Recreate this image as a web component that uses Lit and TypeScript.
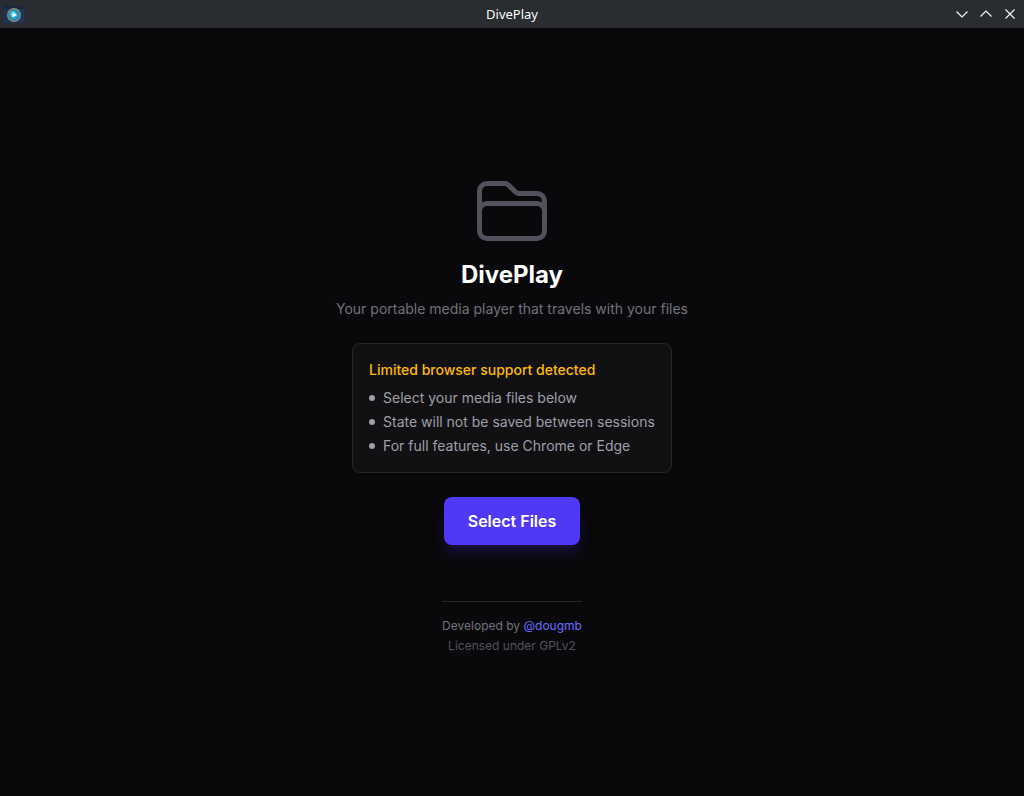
import { LitElement, css, html } from "lit";
import { customElement } from "lit/decorators.js";

@customElement("window-bar")
class WindowBar extends LitElement {
  static styles = css`
    :host {
      display: grid;
      grid-template-columns: 1fr auto 1fr;
      align-items: center;
      height: 28px;
      padding: 0 4px;
      background: #292c30;
      color: #fcfcfc;
      font: 13px/20px "Noto Sans", sans-serif;
    }
    .logo {
      display: block;
    }
    .controls {
      display: flex;
      justify-content: flex-end;
      gap: 4px;
    }
    .control {
      display: flex;
      padding: 0;
      border: 0;
      background: none;
      color: inherit;
    }
  `;

  render() {
    return html`
      <svg class="logo" width="20" height="20" viewBox="0 0 20 20" aria-hidden="true">
        <path d="M0 3q0-2 2-2h5l1.500 1.500H18q2 0 2 2V17q0 2-2 2H2q-2 0-2-2z" fill="#1a2740" />
        <path d="M0 5h20v12q0 2-2 2H2q-2 0-2-2z" fill="#1a365c" />
        <circle cx="10" cy="11" r="6.200" fill="#1583b5" stroke="#8f8468" stroke-width="1.600" />
        <circle cx="10" cy="11" r="4.200" fill="#22a5cf" />
        <circle cx="9" cy="10" r="2.800" fill="#4accdf" />
        <path d="M8.500 8.500l4.500 2.500-4.500 2.500z" fill="#f3fdff" />
      </svg>
      <span>DivePlay</span>
      <div class="controls">
        ${[
          ["Minimize", "M4.500 7.500l5.500 5.500 5.500-5.500"],
          ["Maximize", "M4.500 12.500L10 7l5.500 5.500"],
          ["Close", "M5.500 5.500l9 9M14.500 5.500l-9 9"],
        ].map(
          ([label, d]) => html`
            <button class="control" aria-label=${label}>
              <svg width="20" height="20" viewBox="0 0 20 20" fill="none" stroke="currentColor" stroke-width="1.100">
                <path d=${d} />
              </svg>
            </button>
          `
        )}
      </div>
    `;
  }
}

@customElement("app-root")
class AppRoot extends LitElement {
  static styles = css`
    :host {
      display: flex;
      flex-direction: column;
      min-height: 100vh;
      background: #09090b;
      font: 14px/20px Inter, sans-serif;
    }
    .welcome {
      flex: 1;
      display: flex;
      flex-direction: column;
      align-items: center;
      justify-content: center;
      text-align: center;
    }
    .folder {
      width: 80px;
      height: 80px;
      color: #52525c;
    }
    .title {
      margin: 8px 0;
      color: #fff;
      font-size: 24px;
      line-height: 32px;
      font-weight: 700;
    }
    .tagline {
      margin: 0 0 24px;
      color: #71717b;
    }
    .notice {
      box-sizing: border-box;
      width: 100%;
      max-width: 320px;
      margin-bottom: 24px;
      padding: 16px;
      border: 1px solid #27272a;
      border-radius: 8px;
      background: #111113;
      text-align: left;
    }
    .warning {
      margin: 0 0 8px;
      color: #ffb900;
      font-size: 14px;
      line-height: 20px;
      font-weight: 500;
    }
    .points {
      display: grid;
      gap: 4px;
      margin: 0;
      padding: 0;
      list-style: none;
      color: #9f9fa9;
    }
    .point {
      display: flex;
      align-items: center;
      gap: 8px;
    }
    .point::before {
      content: "";
      width: 6px;
      height: 6px;
      border-radius: 50%;
      background: currentColor;
    }
    .select {
      padding: 12px 24px;
      border: 0;
      border-radius: 8px;
      background: #4f39f6;
      color: #fff;
      font: 600 16px/24px Inter, sans-serif;
      box-shadow: 0 10px 15px -3px #4f39f633, 0 4px 6px -4px #4f39f633;
    }
    .credits {
      display: grid;
      gap: 4px;
      margin-top: 56px;
      padding-top: 16px;
      border-top: 1px solid #27272a;
      color: #71717b;
      font-size: 12px;
      line-height: 16px;
    }
    .author {
      color: #6b6dff;
      text-decoration: none;
    }
    .license {
      color: #52525c;
    }
  `;

  render() {
    return html`
      <window-bar></window-bar>
      <main class="welcome">
        <svg class="folder" viewBox="0 0 24 24" fill="none" stroke="currentColor" stroke-width="1.500" stroke-linecap="round" stroke-linejoin="round" aria-hidden="true">
          <path d="M2.250 12.750V12A2.250 2.250 0 0 1 4.500 9.750h15A2.250 2.250 0 0 1 21.750 12v.75m-8.690-6.440-2.120-2.120a1.500 1.500 0 0 0-1.061-.44H4.500A2.250 2.250 0 0 0 2.250 6v12a2.250 2.250 0 0 0 2.250 2.250h15A2.250 2.250 0 0 0 21.750 18V9a2.250 2.250 0 0 0-2.250-2.250h-5.379a1.500 1.500 0 0 1-1.060-.44Z" />
        </svg>
        <h1 class="title">DivePlay</h1>
        <p class="tagline">Your portable media player that travels with your files</p>
        <section class="notice">
          <h2 class="warning">Limited browser support detected</h2>
          <ul class="points">
            <li class="point">Select your media files below</li>
            <li class="point">State will not be saved between sessions</li>
            <li class="point">For full features, use Chrome or Edge</li>
          </ul>
        </section>
        <button class="select">Select Files</button>
        <footer class="credits">
          <span>Developed by <a class="author" href="#dougmb">@dougmb</a></span>
          <span class="license">Licensed under GPLv2</span>
        </footer>
      </main>
    `;
  }
}
